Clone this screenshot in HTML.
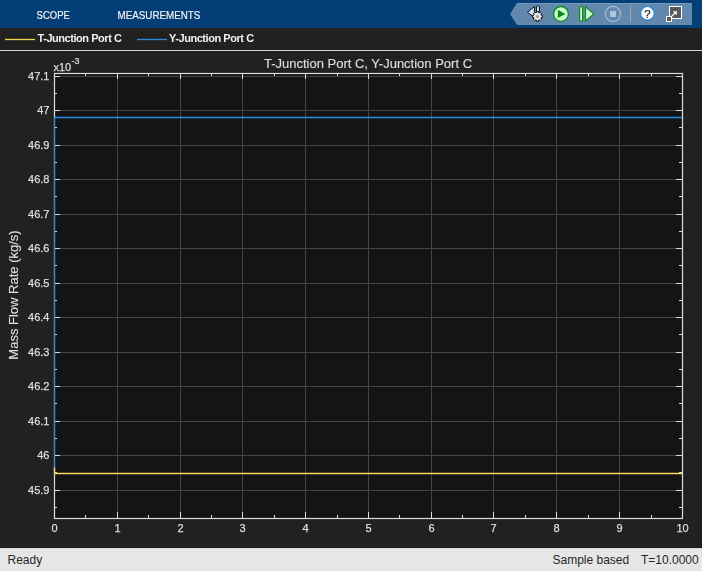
<!DOCTYPE html>
<html><head><meta charset="utf-8"><style>
html,body{margin:0;padding:0;}
body{width:702px;height:571px;overflow:hidden;position:relative;background:#212121;font-family:"Liberation Sans",sans-serif;}
svg text{font-family:"Liberation Sans",sans-serif;}
svg{will-change:transform;}
.t{stroke:#dedede;stroke-width:0.25px;}
#status{position:absolute;left:0;top:548px;width:702px;height:23px;background:#e6e6e6;border-top:1px solid #dadada;box-sizing:border-box;font-size:12px;color:#262626;}
#status span{position:absolute;top:4px;white-space:nowrap;}
</style></head><body>

<svg width="702" height="28" viewBox="0 0 702 28" style="position:absolute;left:0;top:0">
<rect x="0" y="0" width="702" height="28" fill="#043e76"/>
<polygon points="517,3 510,14 517,25 692,25 692,3" fill="#6388ad"/>
<rect x="517" y="3" width="175" height="1" fill="#7698b9"/>
<text transform="translate(36.6,19.2) scale(0.85,1)" font-size="11.2" fill="#f2f2f2" stroke="#f2f2f2" stroke-width="0.2">SCOPE</text>
<text transform="translate(117.6,19.2) scale(0.875,1)" font-size="11.2" fill="#f2f2f2" stroke="#f2f2f2" stroke-width="0.2">MEASUREMENTS</text>
<!-- step back gear -->
<polygon points="527.5,12.3 534.5,6.5 534.5,17.5" fill="#bfe3ff" stroke="#111" stroke-width="1"/>
<rect x="536.5" y="6" width="3" height="6" rx="1" fill="#bfe3ff" stroke="#111" stroke-width="1"/>
<g transform="translate(537.5,16.4)">
<path d="M-1.30,-3.46 L-0.99,-4.90 L0.99,-4.90 L1.30,-3.46 L1.53,-3.37 L2.76,-4.17 L4.17,-2.76 L3.37,-1.53 L3.46,-1.30 L4.90,-0.99 L4.90,0.99 L3.46,1.30 L3.37,1.53 L4.17,2.76 L2.76,4.17 L1.53,3.37 L1.30,3.46 L0.99,4.90 L-0.99,4.90 L-1.30,3.46 L-1.53,3.37 L-2.76,4.17 L-4.17,2.76 L-3.37,1.53 L-3.46,1.30 L-4.90,0.99 L-4.90,-0.99 L-3.46,-1.30 L-3.37,-1.53 L-4.17,-2.76 L-2.76,-4.17 L-1.53,-3.37 Z" fill="#ebebeb" stroke="#151515" stroke-width="1" stroke-linejoin="round"/>
<circle r="1.5" fill="#999999"/>
</g>
<!-- play -->
<circle cx="561" cy="13.9" r="7.4" fill="#ccffcc" stroke="#0b8a1c" stroke-width="1.3"/>
<polygon points="557.8,9.8 565.3,13.9 557.8,18" fill="#0b8a1c"/>
<!-- step forward -->
<rect x="579.6" y="6.6" width="3" height="14.6" rx="0.8" fill="#ccffcc" stroke="#0b8a1c" stroke-width="1.2"/>
<polygon points="585.5,6.8 593.8,13.9 585.5,21" fill="#ccffcc" stroke="#0b8a1c" stroke-width="1.2"/>
<!-- stop (disabled) -->
<circle cx="613" cy="14" r="7.6" fill="none" stroke="#a9bfd3" stroke-width="1.1"/>
<rect x="610" y="11" width="6" height="6" fill="#aec4d8"/>
<!-- separator -->
<rect x="630" y="5" width="1" height="17.5" fill="#aca39e"/>
<!-- help -->
<circle cx="647.4" cy="13.3" r="6.8" fill="#ffffff" stroke="#2a86d8" stroke-width="1.2"/>
<text x="647.5" y="17.7" text-anchor="middle" font-size="11.5" fill="#111" stroke="#111" stroke-width="0.15">?</text>
<!-- undock -->
<rect x="669.5" y="6.5" width="12" height="12" fill="#595959" stroke="#ffffff" stroke-width="1"/>
<rect x="666.5" y="16.5" width="5" height="5" fill="#595959" stroke="#ffffff" stroke-width="1"/>
<path d="M671.5,16.5 L675.5,12.5" fill="none" stroke="#ffffff" stroke-width="1.1"/><polygon points="672.8,11.2 676.8,11.2 676.8,15.2" fill="#ffffff"/>
</svg>

<svg width="702" height="571" viewBox="0 0 702 571" style="position:absolute;left:0;top:0"><rect x="54" y="73" width="628" height="445" fill="#141414"/><path d="M117.5 73V518M180.5 73V518M242.5 73V518M305.5 73V518M368.5 73V518M431.5 73V518M493.5 73V518M556.5 73V518M619.5 73V518M54 76.5H682M54 110.5H682M54 145.5H682M54 179.5H682M54 214.5H682M54 248.5H682M54 283.5H682M54 317.5H682M54 352.5H682M54 386.5H682M54 421.5H682M54 455.5H682M54 490.5H682" stroke="#464646" stroke-width="1" fill="none" shape-rendering="crispEdges"/><path d="M117.5 518v-6M117.5 73v6M180.5 518v-6M180.5 73v6M242.5 518v-6M242.5 73v6M305.5 518v-6M305.5 73v6M368.5 518v-6M368.5 73v6M431.5 518v-6M431.5 73v6M493.5 518v-6M493.5 73v6M556.5 518v-6M556.5 73v6M619.5 518v-6M619.5 73v6M85.5 518v-3M85.5 73v3M148.5 518v-3M148.5 73v3M211.5 518v-3M211.5 73v3M274.5 518v-3M274.5 73v3M337.5 518v-3M337.5 73v3M399.5 518v-3M399.5 73v3M462.5 518v-3M462.5 73v3M525.5 518v-3M525.5 73v3M588.5 518v-3M588.5 73v3M651.5 518v-3M651.5 73v3M54 76.5h6M682 76.5h-6M54 110.5h6M682 110.5h-6M54 145.5h6M682 145.5h-6M54 179.5h6M682 179.5h-6M54 214.5h6M682 214.5h-6M54 248.5h6M682 248.5h-6M54 283.5h6M682 283.5h-6M54 317.5h6M682 317.5h-6M54 352.5h6M682 352.5h-6M54 386.5h6M682 386.5h-6M54 421.5h6M682 421.5h-6M54 455.5h6M682 455.5h-6M54 490.5h6M682 490.5h-6M54 93.5h3M682 93.5h-3M54 127.5h3M682 127.5h-3M54 162.5h3M682 162.5h-3M54 196.5h3M682 196.5h-3M54 231.5h3M682 231.5h-3M54 265.5h3M682 265.5h-3M54 300.5h3M682 300.5h-3M54 334.5h3M682 334.5h-3M54 369.5h3M682 369.5h-3M54 403.5h3M682 403.5h-3M54 438.5h3M682 438.5h-3M54 472.5h3M682 472.5h-3M54 507.5h3M682 507.5h-3" stroke="#dcdcdc" stroke-width="1" fill="none" shape-rendering="crispEdges"/><rect x="54.5" y="73.5" width="628" height="445" fill="none" stroke="#dcdcdc" stroke-width="1.2"/><polyline points="54.5,117.5 682,117.5" fill="none" stroke="#2a8ce0" stroke-width="1.4"/><polyline points="54.5,467.7 54.5,117.5" fill="none" stroke="#2a8ce0" stroke-width="1.15"/><polyline points="54.5,467.7 54.5,472.3 56,473.5 682,473.5" fill="none" stroke="#f5dc5a" stroke-width="1.4"/><text x="49.5" y="79.7" text-anchor="end" font-size="11" class="t" fill="#dedede">47.1</text><text x="49.5" y="113.7" text-anchor="end" font-size="11" class="t" fill="#dedede">47</text><text x="49.5" y="148.7" text-anchor="end" font-size="11" class="t" fill="#dedede">46.9</text><text x="49.5" y="182.7" text-anchor="end" font-size="11" class="t" fill="#dedede">46.8</text><text x="49.5" y="217.7" text-anchor="end" font-size="11" class="t" fill="#dedede">46.7</text><text x="49.5" y="251.7" text-anchor="end" font-size="11" class="t" fill="#dedede">46.6</text><text x="49.5" y="286.7" text-anchor="end" font-size="11" class="t" fill="#dedede">46.5</text><text x="49.5" y="320.7" text-anchor="end" font-size="11" class="t" fill="#dedede">46.4</text><text x="49.5" y="355.7" text-anchor="end" font-size="11" class="t" fill="#dedede">46.3</text><text x="49.5" y="389.7" text-anchor="end" font-size="11" class="t" fill="#dedede">46.2</text><text x="49.5" y="424.7" text-anchor="end" font-size="11" class="t" fill="#dedede">46.1</text><text x="49.5" y="458.7" text-anchor="end" font-size="11" class="t" fill="#dedede">46</text><text x="49.5" y="493.7" text-anchor="end" font-size="11" class="t" fill="#dedede">45.9</text><text x="54.5" y="532.2" text-anchor="middle" font-size="11" class="t" fill="#dedede">0</text><text x="117.5" y="532.2" text-anchor="middle" font-size="11" class="t" fill="#dedede">1</text><text x="180.5" y="532.2" text-anchor="middle" font-size="11" class="t" fill="#dedede">2</text><text x="242.5" y="532.2" text-anchor="middle" font-size="11" class="t" fill="#dedede">3</text><text x="305.5" y="532.2" text-anchor="middle" font-size="11" class="t" fill="#dedede">4</text><text x="368.5" y="532.2" text-anchor="middle" font-size="11" class="t" fill="#dedede">5</text><text x="431.5" y="532.2" text-anchor="middle" font-size="11" class="t" fill="#dedede">6</text><text x="493.5" y="532.2" text-anchor="middle" font-size="11" class="t" fill="#dedede">7</text><text x="556.5" y="532.2" text-anchor="middle" font-size="11" class="t" fill="#dedede">8</text><text x="619.5" y="532.2" text-anchor="middle" font-size="11" class="t" fill="#dedede">9</text><text x="682.5" y="532.2" text-anchor="middle" font-size="11" class="t" fill="#dedede">10</text><text x="53.5" y="70.8" font-size="11" class="t" fill="#dedede">x10</text><text x="71.5" y="64.2" font-size="9" class="t" fill="#dedede">-3</text><text x="368" y="67.7" text-anchor="middle" font-size="13" fill="#dedede" stroke="#dedede" stroke-width="0.15">T-Junction Port C, Y-Junction Port C</text><text transform="translate(17.8,295) rotate(-90)" text-anchor="middle" font-size="13" fill="#dedede" stroke="#dedede" stroke-width="0.15">Mass Flow Rate (kg/s)</text><line x1="5" y1="39.5" x2="35" y2="39.5" stroke="#f2d84a" stroke-width="1.3"/><line x1="137" y1="39.5" x2="167" y2="39.5" stroke="#2a8ce0" stroke-width="1.3"/><text x="37.5" y="42" font-size="11" font-weight="bold" letter-spacing="-0.45" fill="#f0f0f0">T-Junction Port C</text><text x="169" y="42" font-size="11" font-weight="bold" letter-spacing="-0.45" fill="#f0f0f0">Y-Junction Port C</text><rect x="0" y="50" width="702" height="1" fill="#d2d2d2"/><rect x="0" y="547" width="702" height="1" fill="#1b1b1b"/></svg>
<div id="status"><span style="left:7.5px">Ready</span><span style="left:552.5px">Sample based</span><span style="left:641px">T=10.0000</span></div>
</body></html>
